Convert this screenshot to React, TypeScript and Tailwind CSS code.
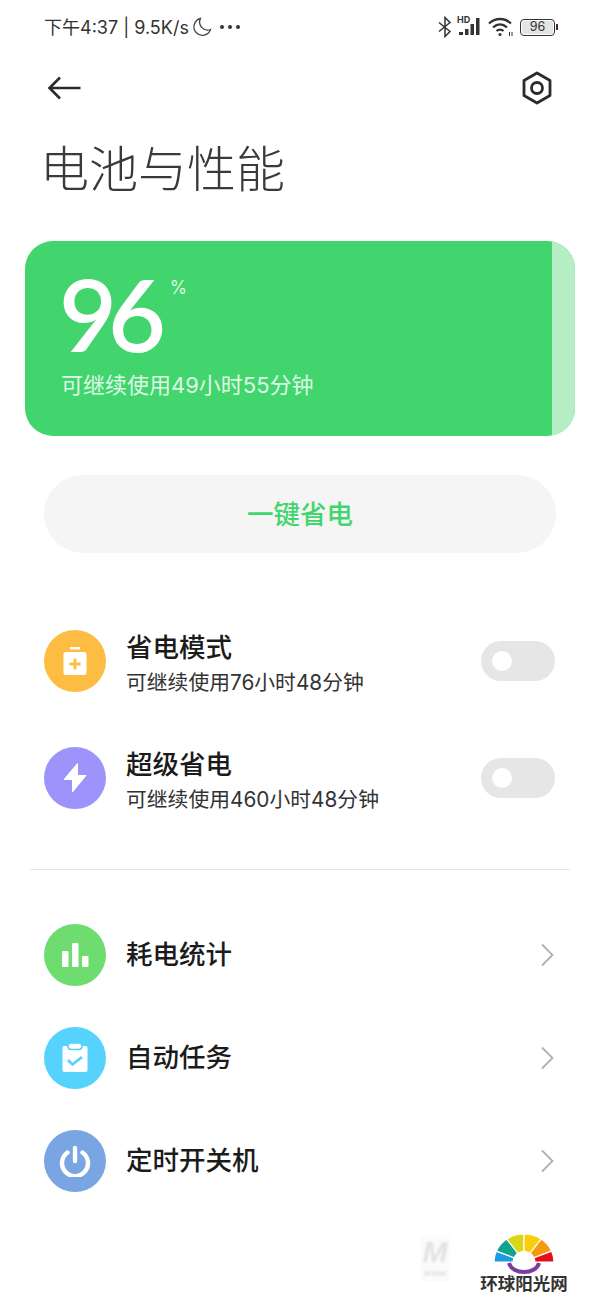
const cjk = "font-['Inter','Noto_Sans_CJK_SC',sans-serif]"

function Switch() {
  return (
    <div className="flex h-10 w-[74px] shrink-0 items-center rounded-full bg-[#e6e6e6] pl-[11px]">
      <div className="h-5 w-5 rounded-full bg-white" />
    </div>
  )
}

function Chevron() {
  return (
    <svg width="16" height="26" viewBox="0 0 16 26" fill="none" className="shrink-0">
      <path d="M3 2.500 13.500 13 3 23.500" stroke="#b0b0b0" strokeWidth="1.800" />
    </svg>
  )
}

function Disc({ color, children }: { color: string; children: React.ReactNode }) {
  return (
    <div className={`flex h-[62px] w-[62px] shrink-0 items-center justify-center rounded-full ${color}`}>
      <svg width="32" height="32" viewBox="0 0 32 32">{children}</svg>
    </div>
  )
}

function ModeRow({ icon, title, sub }: { icon: React.ReactNode; title: string; sub: string }) {
  return (
    <div className="flex h-[62px] items-center">
      {icon}
      <div className="ml-5 flex-1 pt-[10px]">
        <div className="text-[26.500px] leading-[33px] font-medium text-[#1b1b1b]">{title}</div>
        <div className="text-[20.800px] leading-[37px] text-[#333]">{sub}</div>
      </div>
      <Switch />
    </div>
  )
}

function LinkRow({ icon, title }: { icon: React.ReactNode; title: string }) {
  return (
    <div className="flex h-[62px] items-center">
      {icon}
      <div className="ml-5 flex-1 text-[26.500px] font-medium text-[#1b1b1b]">{title}</div>
      <Chevron />
    </div>
  )
}

export default function App() {
  return (
    <div className={`relative h-[1300px] w-[600px] overflow-hidden bg-white ${cjk}`}>
      {/* status bar */}
      <div className="flex h-[54px] items-center justify-between pl-[44px] pr-[42px] text-[#333]">
        <div className="flex items-center text-[18px]">
          <span>下午4:37 | 9.5K/s</span>
          <svg width="20" height="20" viewBox="0 0 20 20" fill="none" className="ml-[3px]">
            <path d="M8.500 1.500a8.500 8.500 0 1 0 10 11 8 8 0 0 1-10-11Z" stroke="#444" strokeWidth="1.300" />
          </svg>
          <svg width="22" height="6" viewBox="0 0 22 6" className="ml-[7px]" fill="#333">
            <circle cx="3" cy="3" r="2" />
            <circle cx="11" cy="3" r="2" />
            <circle cx="19" cy="3" r="2" />
          </svg>
        </div>
        <div className="flex items-center">
          <svg width="14" height="22" viewBox="0 0 14 22" fill="none" stroke="#333" strokeWidth="1.500">
            <path d="M1 6.500 12 15.500 7 20.500V1.500L12 6.500 1 15.500" />
          </svg>
          <div className="relative ml-[5px] h-[20px] w-[24px]">
            <svg width="24" height="18" viewBox="0 0 24 18" fill="#333" className="mt-[1px]">
              <rect x="2" y="14" width="4" height="3" />
              <rect x="8" y="11" width="3.500" height="6" />
              <rect x="13.500" y="6" width="3.500" height="11" />
              <rect x="19" y="0" width="3.500" height="17" />
            </svg>
            <span className="absolute -top-[2px] left-0 text-[9px] leading-[10px] font-bold">HD</span>
          </div>
          <svg width="26" height="20" viewBox="0 0 26 20" fill="none" stroke="#333" strokeWidth="2.300" className="ml-[7px]">
            <path d="M1 6.500c6.500-6 15.500-6 22 0" />
            <path d="M5 10.500c4.300-4 9.700-4 14 0" />
            <path d="M8.500 14c2-1.800 5-1.800 7 0" />
            <circle cx="12" cy="17.500" r="1.500" fill="#333" stroke="none" />
            <path d="M21.500 15v4M24 15v4" strokeWidth="1" />
          </svg>
          <div className="ml-[6px] flex h-[17px] w-[35px] items-center justify-center rounded-[4px] border-[1.500px] border-[#333] p-[1px]">
            <div className="flex h-full w-full items-center justify-center rounded-[2px] bg-[#e4e4e4] text-[12.500px] leading-none">96</div>
          </div>
          <div className="ml-[1px] h-[6px] w-[2px] bg-[#333]" />
        </div>
      </div>

      {/* header */}
      <div className="mt-[10px] flex h-12 items-center justify-between pl-[47px] pr-[47px]">
        <svg width="36" height="28" viewBox="0 0 36 28" fill="none" stroke="#2b2b2b" strokeWidth="2.600">
          <path d="M33.500 14H3M13 3.500 2.500 14 13 24.500" />
        </svg>
        <svg width="32" height="34" viewBox="0 0 32 34" fill="none" stroke="#2b2b2b" strokeWidth="2.800">
          <path d="M16 2 29 9.500V24.500L16 32 3 24.500V9.500Z" strokeLinejoin="round" />
          <circle cx="16" cy="17" r="5.500" />
        </svg>
      </div>

      <h1 className="mt-[26px] pl-[40px] text-[49px] leading-[64px] font-light text-[#3a3a3a]">电池与性能</h1>

      {/* battery card */}
      <div className="mx-[25px] mt-[39px] flex h-[195px] overflow-hidden rounded-[28px] bg-[#42d56d]">
        <div className="flex-1 pl-[36px] pt-[30px] text-white">
          <div className="flex h-[84px] items-start">
            <span className="-ml-[2px] font-['Lato'] text-[100px] leading-[84px] font-semibold tracking-[-9px]">96</span>
            <span className="ml-[13px] mt-[6px] text-[18px] leading-[22px] font-light">%</span>
          </div>
          <div className="mt-[16px] text-[22px] leading-7 text-[#dff8e6]">可继续使用49小时55分钟</div>
        </div>
        <div className="w-[23px] bg-[#b5edc5]" />
      </div>

      <div className="mx-[44px] mt-[39px] flex h-[78px] items-center justify-center rounded-full bg-[#f5f5f5] pt-[2px] text-[26.500px] font-medium text-[#42d56d]">
        一键省电
      </div>

      {/* power saving modes */}
      <div className="mt-[77px] flex flex-col gap-[55px] pl-[44px] pr-[45px]">
        <ModeRow
          title="省电模式"
          sub="可继续使用76小时48分钟"
          icon={
            <Disc color="bg-[#fdbd42]">
              <rect x="11" y="2" width="10" height="2.500" fill="#fff" />
              <rect x="4.500" y="7" width="23" height="23" rx="2" fill="#fff" />
              <path d="M16 13.500v11M10.500 19h11" stroke="#fdbd42" strokeWidth="2.800" />
            </Disc>
          }
        />
        <ModeRow
          title="超级省电"
          sub="可继续使用460小时48分钟"
          icon={
            <Disc color="bg-[#9c94fb]">
              <path d="M18.500 1.500 5 17.500h8.500L13.500 30 27 13.500h-8.500Z" fill="#fff" stroke="#fff" strokeLinejoin="round" />
            </Disc>
          }
        />
      </div>

      <div className="mx-[30px] mt-[60px] h-px bg-[#e4e4e4]" />

      {/* other settings */}
      <div className="mt-[54px] flex flex-col gap-[41px] pl-[44px] pr-[45px]">
        <LinkRow
          title="耗电统计"
          icon={
            <Disc color="bg-[#6fdc6f]">
              <rect x="3" y="12" width="6.500" height="16" rx="1" fill="#fff" />
              <rect x="13" y="4" width="6.500" height="24" rx="1" fill="#fff" />
              <rect x="23" y="17" width="6.500" height="11" rx="1" fill="#fff" />
            </Disc>
          }
        />
        <LinkRow
          title="自动任务"
          icon={
            <Disc color="bg-[#55d3fd]">
              <rect x="3.500" y="4" width="25" height="26" rx="2" fill="#fff" />
              <rect x="9" y="1" width="14" height="6.500" rx="3.200" fill="#fff" stroke="#55d3fd" strokeWidth="1.600" />
              <path d="m9 18 4.500 4.500L23 15" fill="none" stroke="#55d3fd" strokeWidth="2.800" />
            </Disc>
          }
        />
        <LinkRow
          title="定时开关机"
          icon={
            <Disc color="bg-[#79a5e3]">
              <path d="M8.500 7.500a13 13 0 1 0 15 0" fill="none" stroke="#fff" strokeWidth="4.400" strokeLinecap="round" />
              <path d="M16 3v13" fill="none" stroke="#fff" strokeWidth="4.400" strokeLinecap="round" />
            </Disc>
          }
        />
      </div>

      {/* watermarks */}
      <div className="absolute left-[420px] top-[1236px] flex h-[46px] w-[30px] flex-col items-center bg-[#fbfbfb] text-[#e2e2e2] blur-[1px]">
        <span className="font-['Liberation_Sans'] text-[30px] leading-[32px] font-bold italic">M</span>
        <span className="text-[9px] leading-[10px] font-bold italic">www</span>
      </div>
      <div className="absolute left-[479px] top-[1234px] flex w-[90px] flex-col items-center">
        <svg width="60" height="41" viewBox="0 0 60 41" stroke="#fff" strokeWidth="1.200">
          <path d="M0 28A30 28 0 0 1 2.400 17.100L19.900 23.700 19 28Z" fill="#1e9be0" />
          <path d="M2.400 17.100A30 28 0 0 1 12.800 5.100L23.700 19 19.900 23.700Z" fill="#0fa58c" />
          <path d="M12.800 5.100A30 28 0 0 1 30 0V17L23.700 19Z" fill="#d9d615" />
          <path d="M30 0A30 28 0 0 1 47.200 5.100L36.300 19 30 17Z" fill="#fccd0a" />
          <path d="M47.200 5.100A30 28 0 0 1 57.600 17.100L40.100 23.700 36.300 19Z" fill="#f59a0c" />
          <path d="M57.600 17.100A30 28 0 0 1 60 28H41L40.100 23.700Z" fill="#e60e1d" />
          <path d="M15 29c3 12 27 12 30 0" fill="none" stroke="#7b3d9d" strokeWidth="4" />
        </svg>
        <span className="-mt-[1px] font-['Liberation_Serif','Noto_Sans_CJK_SC',serif] text-[17.500px] leading-[20px] font-bold whitespace-nowrap text-[#333]">环球阳光网</span>
      </div>
    </div>
  )
}
